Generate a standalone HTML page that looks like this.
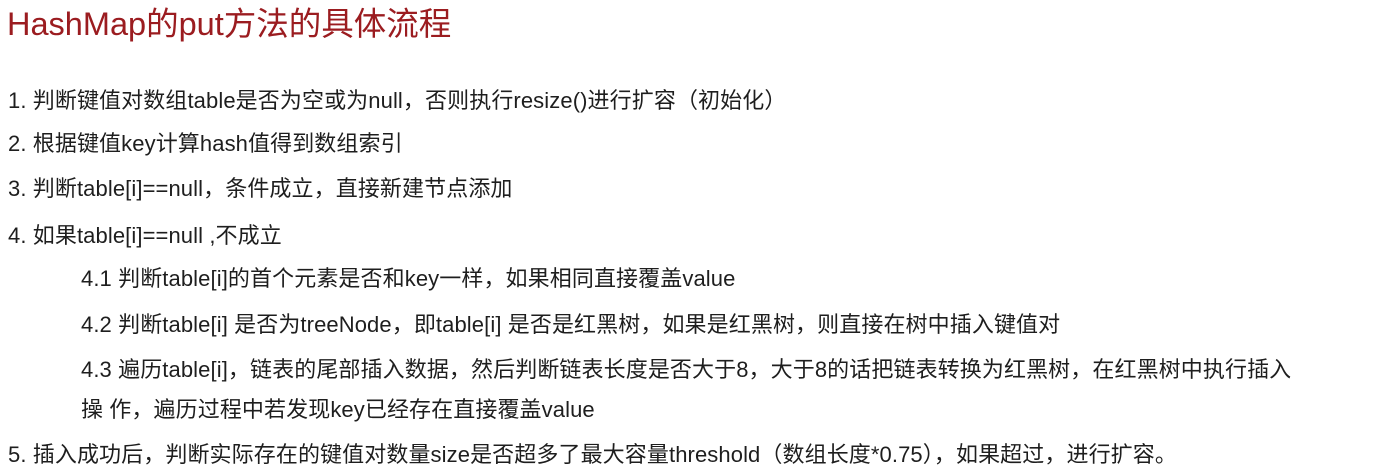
<!DOCTYPE html>
<html><head><meta charset="utf-8"><style>
body{margin:0;width:1388px;height:468px;background:#fff;position:relative;overflow:hidden;font-family:"Liberation Sans","Noto Sans CJK SC",sans-serif;color:#1e1e1e}
div{position:absolute;white-space:nowrap;font-size:22px;line-height:24px;letter-spacing:0.1px}
.t{font-size:32.5px;color:#9b1c20;line-height:36px;left:7px;top:6px;letter-spacing:0}
</style></head><body>
<div class="t">HashMap的put方法的具体流程</div>
<div style="left:8px;top:89px">1. 判断键值对数组table是否为空或为null，否则执行resize()进行扩容（初始化）</div>
<div style="left:8px;top:132px">2. 根据键值key计算hash值得到数组索引</div>
<div style="left:8px;top:177px">3. 判断table[i]==null，条件成立，直接新建节点添加</div>
<div style="left:8px;top:224px">4. 如果table[i]==null ,不成立</div>
<div style="left:81px;top:267px">4.1 判断table[i]的首个元素是否和key一样，如果相同直接覆盖value</div>
<div style="left:81px;top:313px">4.2 判断table[i] 是否为treeNode，即table[i] 是否是红黑树，如果是红黑树，则直接在树中插入键值对</div>
<div style="left:81px;top:358px">4.3 遍历table[i]，链表的尾部插入数据，然后判断链表长度是否大于8，大于8的话把链表转换为红黑树，在红黑树中执行插入</div>
<div style="left:81px;top:398px">操 作，遍历过程中若发现key已经存在直接覆盖value</div>
<div style="left:8px;top:443px">5. 插入成功后，判断实际存在的键值对数量size是否超多了最大容量threshold（数组长度*0.75），如果超过，进行扩容。</div>
</body></html>
